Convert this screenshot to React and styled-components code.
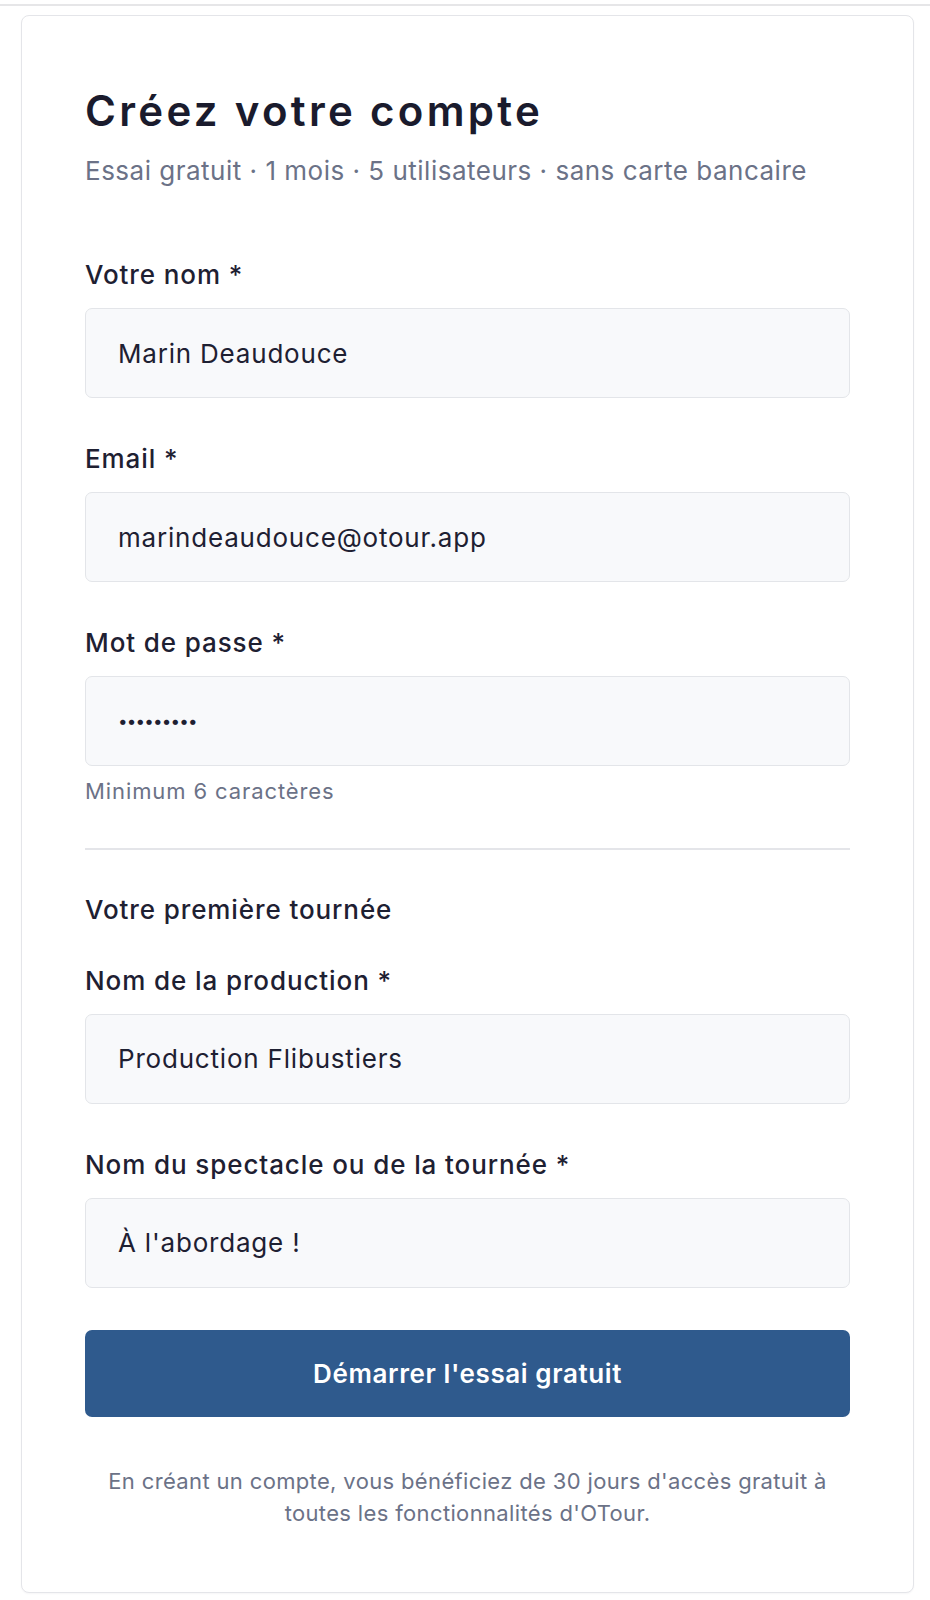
import React from "react";
import styled, { createGlobalStyle } from "styled-components";

const GlobalStyle = createGlobalStyle`
  html, body {
    margin: 0;
    padding: 0;
    background: #ffffff;
  }
  body {
    font-family: Inter, "Noto Sans", "Liberation Sans", sans-serif;
    color: #1e2032;
    -webkit-font-smoothing: antialiased;
  }
  * { box-sizing: border-box; }
`;

const Page = styled.div`
  padding-top: 4px;
  padding-bottom: 5px;
`;

const TopRule = styled.div`
  height: 2px;
  background: #e6e6e8;
  margin-bottom: 9px;
`;

const Card = styled.div`
  margin: 0 16px 0 21px;
  border: 1px solid #e4e5e9;
  border-radius: 8px;
  padding: 63px;
  background: #fff;
  box-shadow: 0 1px 2px rgba(16, 24, 40, 0.04);
`;

const Title = styled.h1`
  margin: 0;
  font-size: 42px;
  line-height: 63px;
  font-weight: 600;
  letter-spacing: 3.3px;
  color: #1a1b2d;
`;

const Subtitle = styled.p`
  margin: 9px 0 0;
  font-size: 26px;
  line-height: 39px;
  letter-spacing: 0.5px;
  color: #6b7287;
`;

const Form = styled.form`
  margin-top: 67px;
  display: flex;
  flex-direction: column;
`;

const Field = styled.div`
  display: flex;
  flex-direction: column;
  gap: 15px;
  margin-bottom: ${(p) => (p.$last ? "0" : "43px")};
`;

const Label = styled.label`
  font-size: 26px;
  line-height: 36px;
  font-weight: 500;
  letter-spacing: 0.9px;
  color: #1e2032;
`;

const Input = styled.input`
  height: 90px;
  width: 100%;
  padding: 0 32px;
  border: 1.5px solid #e3e5e9;
  border-radius: 7px;
  background: #f8f9fb;
  font-family: inherit;
  font-size: ${(p) => (p.type === "password" ? "17px" : "26px")};
  letter-spacing: ${(p) => (p.type === "password" ? "-0.8px" : "0.8px")};
  color: #1e2032;
  outline: none;
`;

const Hint = styled.div`
  margin-top: -34px;
  margin-bottom: 41px;
  font-size: 22px;
  line-height: 32px;
  letter-spacing: 0.9px;
  color: #6b7287;
`;

const Divider = styled.hr`
  margin: 0;
  border: 0;
  height: 1.5px;
  background: #e4e5e9;
`;

const SectionTitle = styled.h2`
  margin: 42px 0 35px;
  font-size: 26px;
  line-height: 36px;
  font-weight: 500;
  letter-spacing: 0.9px;
  color: #1e2032;
`;

const SubmitButton = styled.button`
  margin-top: 42px;
  height: 87px;
  width: 100%;
  border: 0;
  border-radius: 7px;
  background: #2f5a8d;
  color: #ffffff;
  font-family: inherit;
  font-size: 26px;
  font-weight: 600;
  letter-spacing: 0.6px;
  cursor: pointer;
`;

const Footer = styled.p`
  margin: 48px 0 0;
  text-align: center;
  font-size: 22px;
  line-height: 32px;
  letter-spacing: 0.35px;
  color: #6b7287;
`;

const fieldsAccount = [
  { id: "name", label: "Votre nom *", type: "text", value: "Marin Deaudouce" },
  { id: "email", label: "Email *", type: "email", value: "marindeaudouce@otour.app" },
  { id: "password", label: "Mot de passe *", type: "password", value: "Flibust3r" },
];

const fieldsTour = [
  { id: "production", label: "Nom de la production *", type: "text", value: "Production Flibustiers" },
  { id: "show", label: "Nom du spectacle ou de la tournée *", type: "text", value: "À l'abordage !" },
];

function FormField({ id, label, type, value, last }) {
  return (
    <Field $last={last}>
      <Label htmlFor={id}>{label}</Label>
      <Input id={id} type={type} value={value} readOnly />
    </Field>
  );
}

export default function App() {
  return (
    <Page>
      <GlobalStyle />
      <TopRule />
      <Card>
        <Title>Créez votre compte</Title>
        <Subtitle>Essai gratuit · 1 mois · 5 utilisateurs · sans carte bancaire</Subtitle>
        <Form onSubmit={(e) => e.preventDefault()}>
          {fieldsAccount.map((f) => (
            <FormField key={f.id} {...f} />
          ))}
          <Hint>Minimum 6 caractères</Hint>
          <Divider />
          <SectionTitle>Votre première tournée</SectionTitle>
          {fieldsTour.map((f, i) => (
            <FormField key={f.id} {...f} last={i === fieldsTour.length - 1} />
          ))}
          <SubmitButton type="submit">Démarrer l'essai gratuit</SubmitButton>
        </Form>
        <Footer>
          En créant un compte, vous bénéficiez de 30 jours d'accès gratuit à toutes les fonctionnalités d'OTour.
        </Footer>
      </Card>
    </Page>
  );
}
